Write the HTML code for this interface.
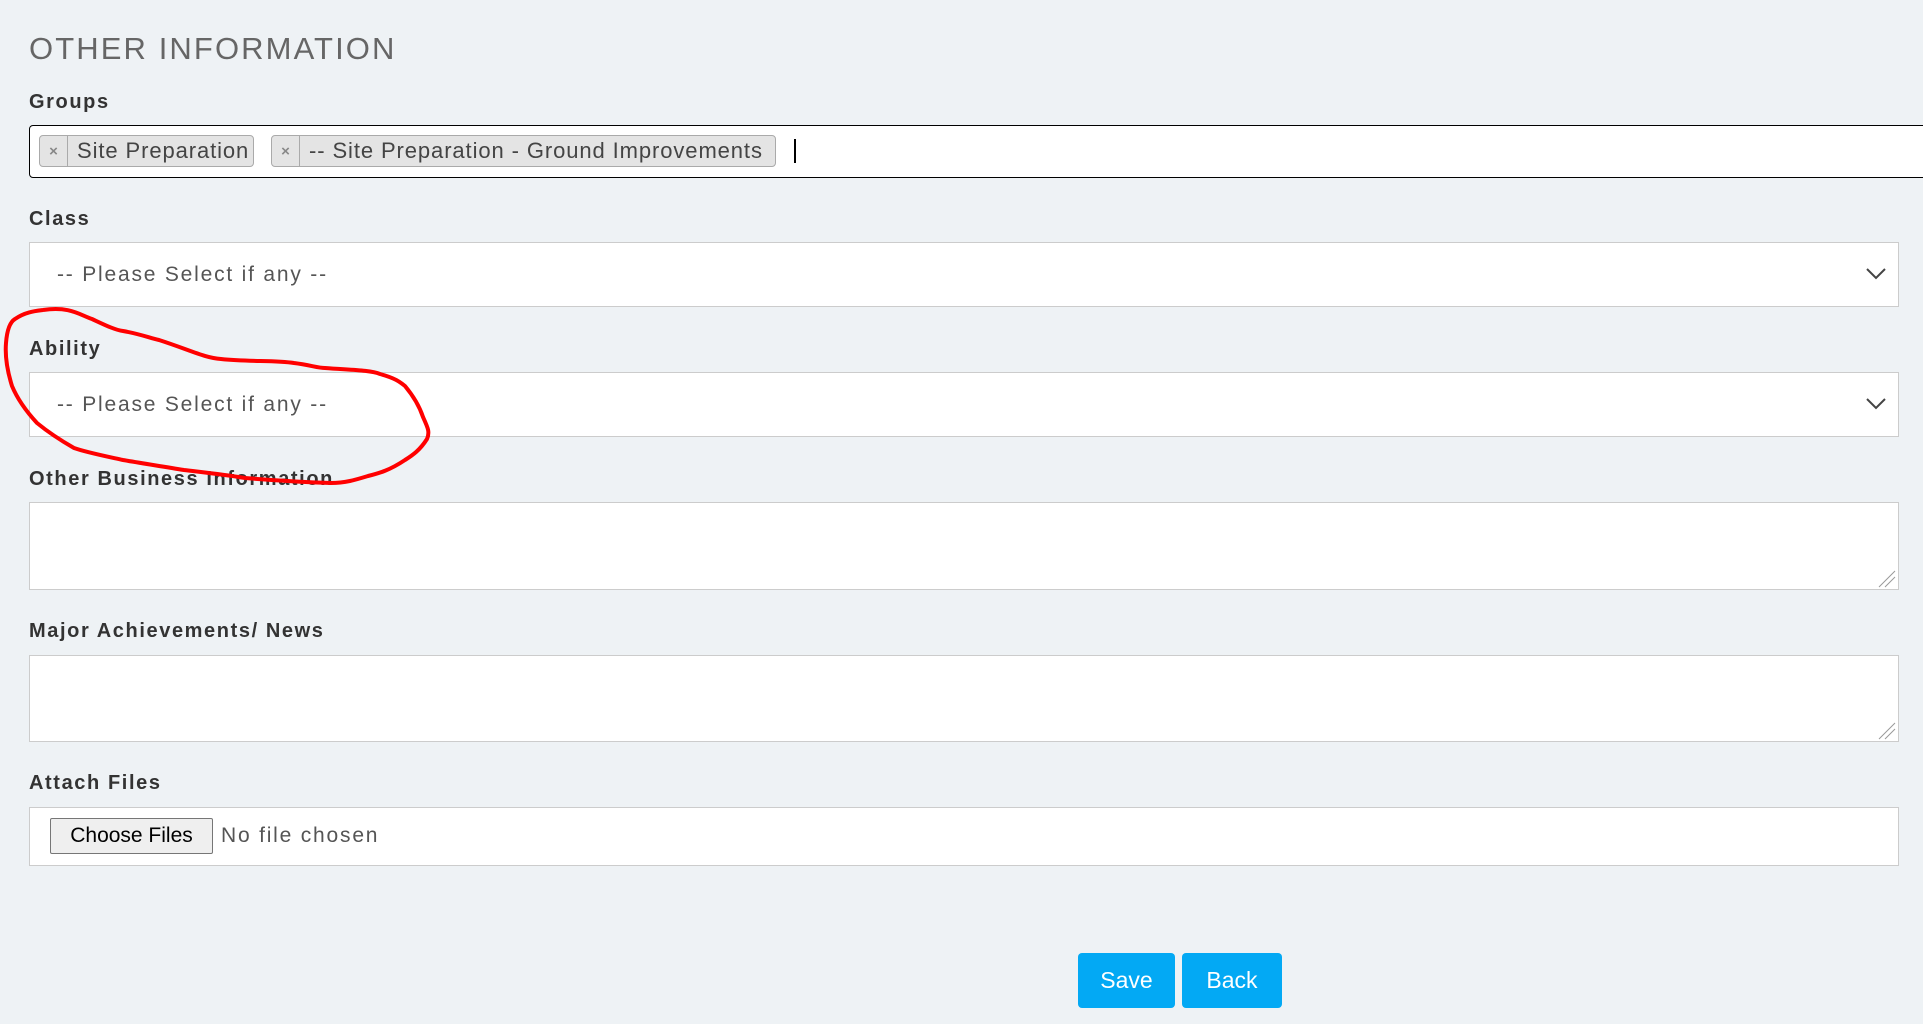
<!DOCTYPE html>
<html><head><meta charset="utf-8"><style>
*{box-sizing:border-box;margin:0;padding:0}
body{width:1923px;height:1024px;background:#eef2f5;font-family:"Liberation Sans",sans-serif;position:relative;overflow:hidden;color:#333}
.abs{position:absolute}
.title{left:29px;top:31px;font-size:31px;color:#666;letter-spacing:2.1px}
.lbl{left:29px;font-size:20px;font-weight:bold;color:#333;letter-spacing:1.6px}
.box{left:29px;width:1870px;background:#fff;border:1px solid #ccc}
.sel{font-size:21px;color:#555;padding-left:27px;display:flex;align-items:center;letter-spacing:1.8px}
.tag{top:135px;height:32px;background:#e4e4e4;border:1px solid #aaa;border-radius:4px;font-size:22px;color:#444;display:flex;align-items:center;letter-spacing:0.9px}
.tag .x{width:28px;height:100%;border-right:1px solid #aaa;display:flex;align-items:center;justify-content:center;font-size:15px;color:#888;font-weight:bold;letter-spacing:0}
.tag .t{padding-left:9px;white-space:nowrap}
.btn{top:953px;height:55px;background:#03a9f4;color:#fff;font-size:23px;border-radius:4px;display:flex;align-items:center;justify-content:center}
</style></head><body>
<div class="abs title">OTHER INFORMATION</div>
<div class="abs lbl" style="top:91px">Groups</div>
<div class="abs" style="left:29px;top:125px;width:1900px;height:53px;background:#fff;border:1px solid #000;border-radius:4px"></div>
<div class="abs tag" style="left:39px;width:215px"><div class="x">×</div><div class="t">Site Preparation</div></div>
<div class="abs tag" style="left:271px;width:505px"><div class="x">×</div><div class="t">-- Site Preparation - Ground Improvements</div></div>
<div class="abs" style="left:794px;top:139px;width:2px;height:24px;background:#000"></div>

<div class="abs lbl" style="top:208px">Class</div>
<div class="abs box sel" style="top:242px;height:65px">-- Please Select if any --</div>
<svg class="abs" style="left:1866px;top:268px" width="20" height="12"><path d="M1 1 L10 10 L19 1" fill="none" stroke="#444" stroke-width="2"/></svg>

<div class="abs lbl" style="top:338px">Ability</div>
<div class="abs box sel" style="top:372px;height:65px">-- Please Select if any --</div>
<svg class="abs" style="left:1866px;top:398px" width="20" height="12"><path d="M1 1 L10 10 L19 1" fill="none" stroke="#444" stroke-width="2"/></svg>

<div class="abs lbl" style="top:468px">Other Business Information</div>
<div class="abs box" style="top:502px;height:88px"></div>
<div class="abs lbl" style="top:620px">Major Achievements/ News</div>
<div class="abs box" style="top:655px;height:87px"></div>
<svg class="abs" style="left:1875px;top:570px" width="22" height="170"><path d="M4 17 L20 1 M10 17 L20 7 M4 169 L20 153 M10 169 L20 159" stroke="#999" stroke-width="1"/></svg>

<div class="abs lbl" style="top:772px">Attach Files</div>
<div class="abs box" style="top:807px;height:59px"></div>
<div class="abs" style="left:50px;top:818px;width:163px;height:36px;background:#efefef;border:1px solid #767676;border-radius:2px;font-size:21px;color:#000;display:flex;align-items:center;justify-content:center">Choose Files</div>
<div class="abs" style="left:221px;top:824px;font-size:21px;color:#555;letter-spacing:1.8px">No file chosen</div>

<div class="abs btn" style="left:1078px;width:97px">Save</div>
<div class="abs btn" style="left:1182px;width:100px">Back</div>

<svg class="abs" style="left:0;top:0" width="1923" height="1024"><path d="M43 310 C70 306 80 315 92 319 C105 325 115 330 123 331 C140 334 150 338 159 340 C190 350 205 358 221 359 C250 362 275 360 294 363 C310 365 318 368 325 368 C350 370 370 370 380 374 C395 378 400 382 405 386 C415 398 420 408 423 417 C428 428 430 432 427 439 C420 450 413 455 405 460 C390 470 380 473 368 476 C355 480 345 483 331 483 C300 482 270 480 245 478 C220 474 200 472 184 470 C160 466 140 463 123 460 C100 455 85 452 74 448 C60 440 48 432 37 423 C25 410 17 398 12 386 C7 370 5 355 6 343 C7 330 10 322 15 319 C25 312 35 311 43 310" fill="none" stroke="#f00" stroke-width="4"/></svg>
</body></html>
